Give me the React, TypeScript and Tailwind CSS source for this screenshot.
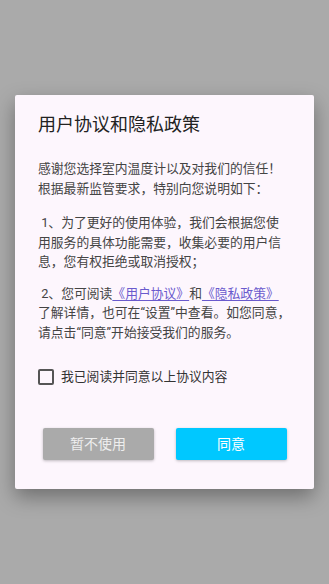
export default function App() {
  return (
    <div
      className="flex min-h-[584px] w-full items-center justify-center bg-[#aaaaaa]"
      style={{ fontFamily: "Roboto, 'Noto Sans CJK SC', sans-serif" }}
    >
      <div className="w-[299px] rounded-[2px] bg-[#fdf6fd] px-[23px] pt-[18px] pb-[29px] shadow-[0_8px_20px_rgba(0,0,0,0.35)]">
        <h1 className="text-[18px] leading-[24px] text-[#222222]">用户协议和隐私政策</h1>

        <div className="mt-[22px] text-[12.8px] leading-[19.5px] text-[#444444]">
          <p>
            感谢您选择室内温度计以及对我们的信任！
            <br />
            根据最新监管要求，特别向您说明如下：
          </p>
          <p className="mt-[15px]">
            &nbsp;1、为了更好的使用体验，我们会根据您使用服务的具体功能需要，收集必要的用户信息，您有权拒绝或取消授权；
          </p>
          <p className="mt-[12px]">
            &nbsp;2、您可阅读
            <span className="text-[#6a5acd] underline underline-offset-2">《用户协议》</span>和
            <span className="text-[#6a5acd] underline underline-offset-2">《隐私政策》</span>
            了解详情，也可在“设置”中查看。如您同意，请点击“同意”开始接受我们的服务。
          </p>
        </div>

        <label className="mt-[25px] flex h-[20px] items-center gap-[7px]">
          <span className="h-[16px] w-[16px] rounded-[2px] border-2 border-[#555555]" />
          <span className="text-[12.8px] text-[#333333]">我已阅读并同意以上协议内容</span>
        </label>

        <div className="mt-[41px] flex justify-center gap-[22px]">
          <button className="h-[32px] w-[111px] rounded-[2px] bg-[#aaaaaa] text-[14px] text-[#eeeeee] shadow-[0_1px_3px_rgba(0,0,0,0.25)]">
            暂不使用
          </button>
          <button className="h-[32px] w-[111px] rounded-[2px] bg-[#00c8ff] text-[14px] text-white shadow-[0_1px_3px_rgba(0,0,0,0.25)]">
            同意
          </button>
        </div>
      </div>
    </div>
  );
}
